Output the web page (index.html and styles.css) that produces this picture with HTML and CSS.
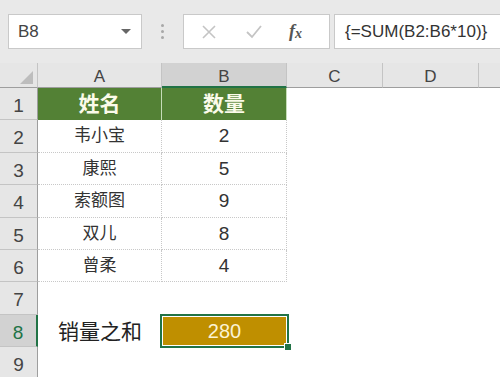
FILE: index.html
```html
<!DOCTYPE html>
<html lang="zh-CN">
<head>
    <meta charset="UTF-8">
    <meta name="viewport" content="width=device-width, initial-scale=1.0">
    <title>销量之和</title>
    <link rel="stylesheet" href="styles.css">
</head>
<body>

<!-- 名称框 + 编辑栏 -->
<div class="formula-bar">
    <div class="name-box">
        <span>B8</span>
        <span class="drop"></span>
    </div>
    <div class="grip">
        <i></i><i></i><i></i>
    </div>
    <div class="fx-box">
        <svg class="btn-icon" width="16" height="16" viewBox="0 0 16 16">
            <path d="M2 2 L14 14 M14 2 L2 14" stroke="#c4c4c4" stroke-width="1.6" fill="none"/>
        </svg>
        <svg class="btn-icon" width="18" height="16" viewBox="0 0 18 16">
            <path d="M2 8 L7 13 L16 2" stroke="#c4c4c4" stroke-width="1.8" fill="none"/>
        </svg>
        <span class="fx"><i>f</i><b>x</b></span>
    </div>
    <div class="formula">{=SUM(B2:B6*10)}</div>
</div>

<!-- 工作表 -->
<div class="sheet">
    <div class="corner"><span class="tri"></span></div>
    <div class="col-head">A</div>
    <div class="col-head active">B</div>
    <div class="col-head">C</div>
    <div class="col-head">D</div>
    <div class="col-head last"></div>

    <div class="row-head">1</div>
    <div class="cell title">姓名</div>
    <div class="cell title">数量</div>
    <div class="cell"></div><div class="cell"></div><div class="cell"></div>

    <div class="row-head">2</div>
    <div class="cell data">韦小宝</div>
    <div class="cell data num">2</div>
    <div class="cell"></div><div class="cell"></div><div class="cell"></div>

    <div class="row-head">3</div>
    <div class="cell data">康熙</div>
    <div class="cell data num">5</div>
    <div class="cell"></div><div class="cell"></div><div class="cell"></div>

    <div class="row-head">4</div>
    <div class="cell data">索额图</div>
    <div class="cell data num">9</div>
    <div class="cell"></div><div class="cell"></div><div class="cell"></div>

    <div class="row-head">5</div>
    <div class="cell data">双儿</div>
    <div class="cell data num">8</div>
    <div class="cell"></div><div class="cell"></div><div class="cell"></div>

    <div class="row-head">6</div>
    <div class="cell data">曾柔</div>
    <div class="cell data num">4</div>
    <div class="cell"></div><div class="cell"></div><div class="cell"></div>

    <div class="row-head">7</div>
    <div class="cell"></div><div class="cell"></div>
    <div class="cell"></div><div class="cell"></div><div class="cell"></div>

    <div class="row-head active">8</div>
    <div class="cell label">销量之和</div>
    <div class="cell total">
        280
        <span class="selection"></span>
        <span class="handle"></span>
    </div>
    <div class="cell"></div><div class="cell"></div><div class="cell"></div>

    <div class="row-head">9</div>
    <div class="cell"></div><div class="cell"></div>
    <div class="cell"></div><div class="cell"></div><div class="cell"></div>
</div>

</body>
</html>
```

FILE: styles.css
```css
body {
    margin: 0;
    width: 500px;
    height: 377px;
    overflow: hidden;
    background-color: #fff;
    font-family: "Liberation Sans", "Noto Sans CJK SC", sans-serif;
    color: #333;
}

/* 编辑栏 */
.formula-bar {
    display: flex;
    align-items: flex-start;
    height: 63px;
    padding: 14px 0 0 8px;
    box-sizing: border-box;
    background-color: #e9e9e9;
}

.name-box {
    display: flex;
    align-items: center;
    justify-content: space-between;
    width: 134px;
    height: 35px;
    padding: 0 10px 0 9px;
    box-sizing: border-box;
    background-color: #fff;
    border: 1px solid #c9c9c9;
    font-size: 17px;
    color: #444;
}

/* 下拉小三角 */
.name-box .drop {
    width: 0;
    height: 0;
    border-left: 5px solid transparent;
    border-right: 5px solid transparent;
    border-top: 5px solid #666;
}

.grip {
    display: flex;
    flex-direction: column;
    align-items: center;
    gap: 3px;
    width: 41px;
    padding-top: 10px;
}

.grip i {
    width: 3px;
    height: 3px;
    border-radius: 50%;
    background-color: #a8a8a8;
}

.fx-box {
    display: flex;
    align-items: center;
    width: 147px;
    height: 35px;
    padding-left: 17px;
    gap: 31px;
    box-sizing: border-box;
    background-color: #fff;
    border: 1px solid #c9c9c9;
}

.fx-box .btn-icon:nth-child(2) {
    margin-left: -3px;
}

.fx {
    margin-left: -5px;
    font-family: "Liberation Serif", serif;
    font-size: 18px;
    color: #555;
}

.fx i {
    font-weight: bold;
}

.fx b {
    font-style: italic;
    font-size: 14px;
    position: relative;
    top: 1px;
}

.formula {
    flex: 1;
    height: 35px;
    margin-left: 4px;
    padding-left: 10px;
    line-height: 33px;
    box-sizing: border-box;
    background-color: #fff;
    border: 1px solid #c9c9c9;
    border-right: none;
    font-size: 17px;
    color: #333;
    white-space: nowrap;
}

/* 工作表网格 */
.sheet {
    display: grid;
    grid-template-columns: 38px 124px 125px 96px 96px 21px;
    grid-template-rows: 25px repeat(9, 32.4px);
}

.corner {
    position: relative;
    background-color: #e6e6e6;
    border-right: 1px solid #c4c4c4;
    border-bottom: 1px solid #9e9e9e;
}

.corner .tri {
    position: absolute;
    right: 4px;
    bottom: 3px;
    width: 0;
    height: 0;
    border-left: 13px solid transparent;
    border-bottom: 13px solid #bdbdbd;
}

.col-head {
    background-color: #e6e6e6;
    border-right: 1px solid #c4c4c4;
    border-bottom: 1px solid #9e9e9e;
    text-align: center;
    font-size: 17px;
    line-height: 28px;
    color: #444;
}

.col-head.active {
    background-color: #d2d2d2;
    border-bottom: 2px solid #217346;
    line-height: 27px;
}

.col-head.last {
    border-right: none;
}

.row-head {
    background-color: #e6e6e6;
    border-right: 1px solid #9e9e9e;
    border-bottom: 1px solid #c4c4c4;
    text-align: center;
    font-size: 19px;
    line-height: 36px;
    color: #444;
}

.row-head.active {
    background-color: #d2d2d2;
    border-right: 2px solid #217346;
    color: #217346;
}

.cell {
    position: relative;
    text-align: center;
    line-height: 32px;
}

.cell.title {
    background-color: #538135;
    border-right: 1px solid #c6dcb8;
    font-size: 21px;
    font-weight: bold;
    color: #fbfbea;
}

.cell.data {
    border-right: 1px dotted #c8c8c8;
    border-bottom: 1px dotted #c8c8c8;
    font-size: 17px;
    line-height: 32px;
}

.cell.num {
    font-size: 19px;
}

.cell.label {
    font-size: 21px;
    color: #222;
    line-height: 34px;
}

.cell.total {
    background-color: #bf8f00;
    font-size: 20px;
    line-height: 32px;
    color: #fbf3d4;
}

/* 选中框 */
.selection {
    position: absolute;
    top: -1px;
    left: -2px;
    right: -2px;
    bottom: -1px;
    border: 2px solid #217346;
    box-shadow: inset 0 0 0 1px #fff;
}

.handle {
    position: absolute;
    right: -5px;
    bottom: -4px;
    width: 6px;
    height: 6px;
    background-color: #217346;
    border: 1px solid #fff;
}
```
